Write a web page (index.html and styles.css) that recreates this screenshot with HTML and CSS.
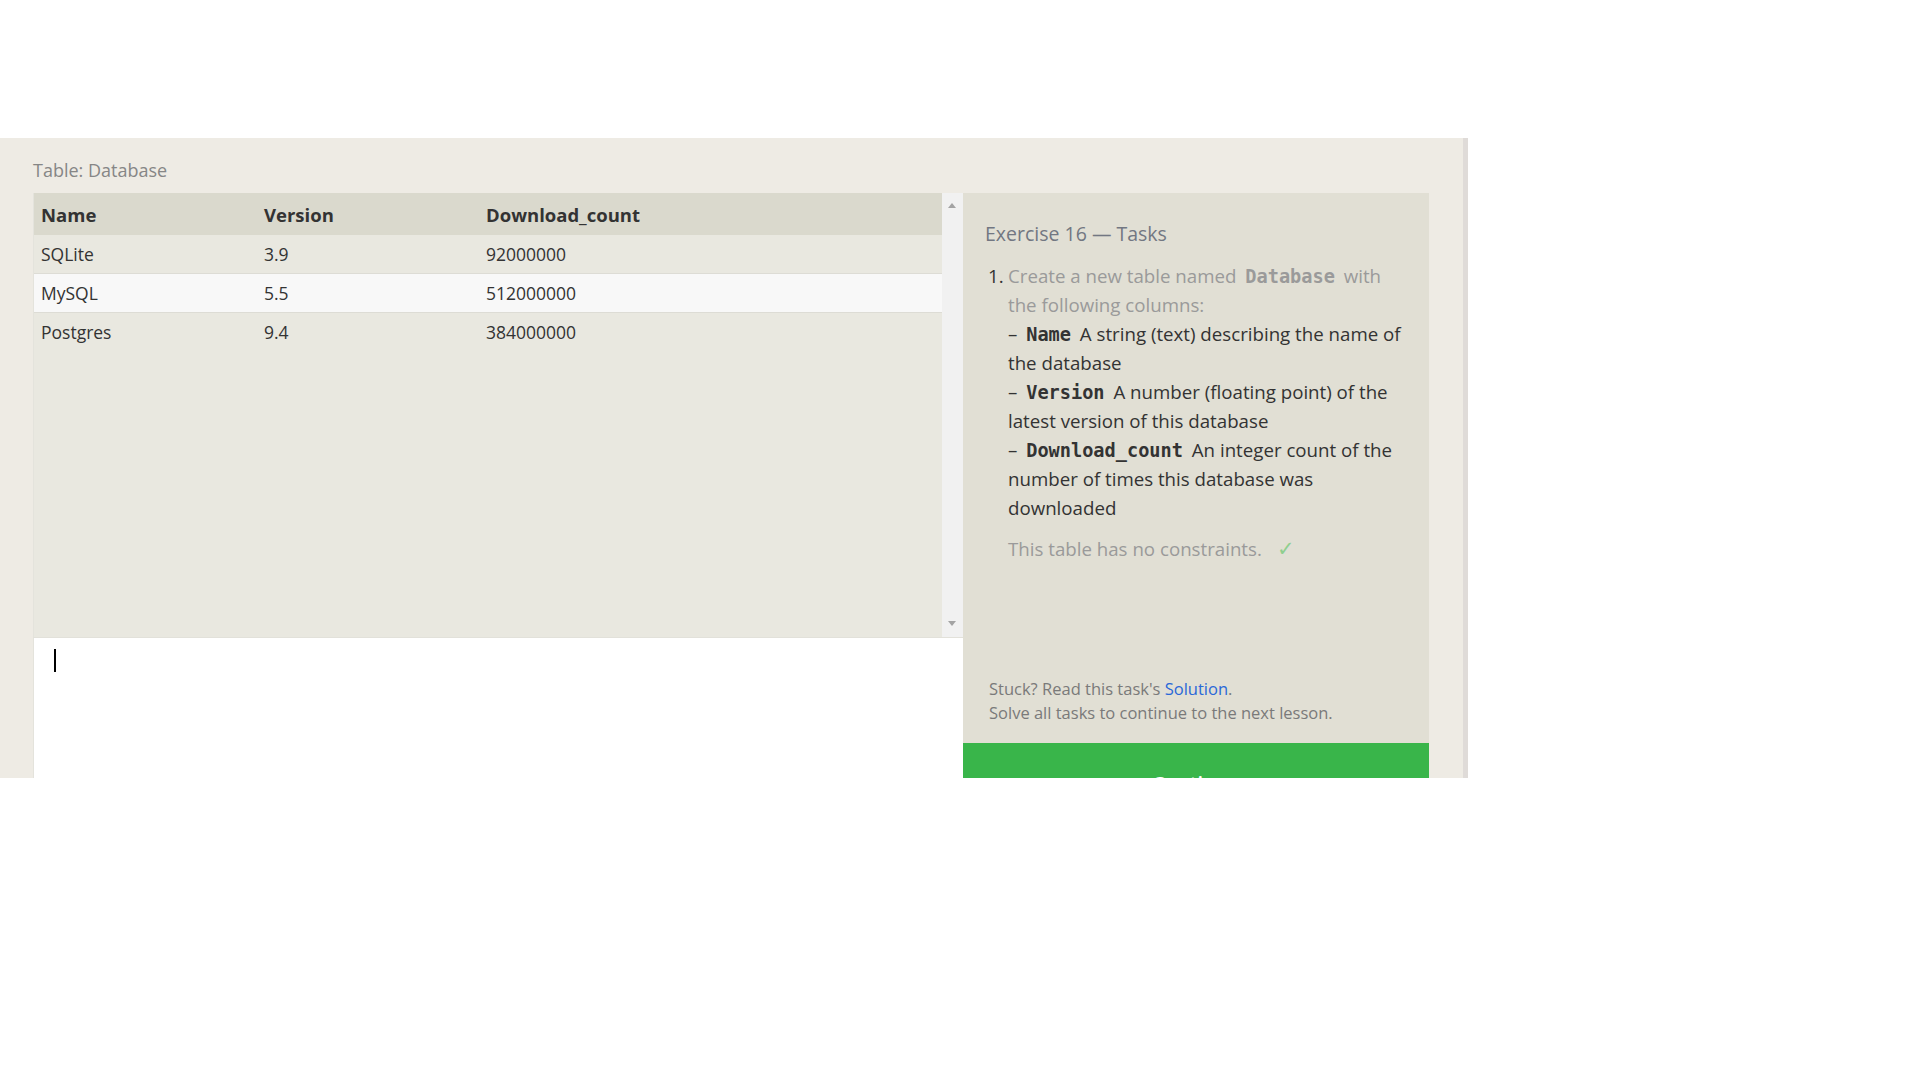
FILE: index.html
```html
<!DOCTYPE html>
<html lang="en">
<head>
<meta charset="utf-8">
<title>Exercise 16</title>
<link rel="stylesheet" href="styles.css">
</head>
<body>
<div class="frame">
  <div class="table-label">Table: Database</div>
  <div class="workspace">
    <div class="left">
      <div class="results">
        <div class="table-wrap">
          <table class="data">
            <thead>
              <tr><th class="c1">Name</th><th class="c2">Version</th><th>Download_count</th></tr>
            </thead>
            <tbody>
              <tr><td>SQLite</td><td>3.9</td><td>92000000</td></tr>
              <tr class="alt"><td>MySQL</td><td>5.5</td><td>512000000</td></tr>
              <tr><td>Postgres</td><td>9.4</td><td>384000000</td></tr>
            </tbody>
          </table>
        </div>
        <div class="scrollbar">
          <span class="arrow up"></span>
          <span class="arrow down"></span>
        </div>
      </div>
      <div class="editor"><span class="cursor"></span></div>
    </div>
    <div class="right">
      <div class="tasks">
        <div class="tasks-title">Exercise 16 — Tasks</div>
        <div class="task">
          <span class="num">1.</span>
          <div class="task-body">
            <span class="muted">Create a new table named <code class="code-muted">Database</code> with the following columns:</span><br>
            – <code>Name</code> A string (text) describing the name of the database<br>
            – <code>Version</code> A number (floating point) of the latest version of this database<br>
            – <code>Download_count</code> An integer count of the number of times this database was downloaded
            <div class="note">This table has no constraints. <span class="check">✓</span></div>
          </div>
        </div>
      </div>
      <div class="hint">
        <div>Stuck? Read this task's <a class="link">Solution</a>.</div>
        <div>Solve all tasks to continue to the next lesson.</div>
      </div>
      <div class="continue">Continue</div>
    </div>
  </div>
</div>
</body>
</html>
```
FILE: styles.css
```css
html, body {
  margin: 0;
  padding: 0;
  background: #ffffff;
}

body {
  font-family: "Open Sans", "Noto Sans", sans-serif;
  color: #333333;
}

.frame {
  margin-top: 138px;
  width: 1468px;
  height: 640px;
  box-sizing: border-box;
  padding: 0 34px 0 33px;
  background: #eeebe4;
  border-right: 5px solid #dfdbd8;
  overflow: hidden;
}

.table-label {
  height: 55px;
  box-sizing: border-box;
  padding-top: 20px;
  font-size: 18px;
  line-height: 25px;
  color: #868686;
}

.workspace {
  display: flex;
  align-items: stretch;
  height: 585px;
}

.left {
  width: 930px;
  display: flex;
  flex-direction: column;
}

.results {
  height: 444px;
  display: flex;
  border-bottom: 1px solid #e2e1da;
}

.table-wrap {
  flex: 1;
  background: #e9e8e0;
  border-left: 1px solid #e4e3dc;
}

.data {
  width: 100%;
  table-layout: fixed;
  border-collapse: collapse;
  font-size: 17.5px;
}

.data th {
  text-align: left;
  font-weight: 700;
  font-size: 18.5px;
  background: #dad9cd;
  height: 41px;
  padding: 1px 0 0 7px;
  color: #333333;
}

.data .c1 { width: 216px; }
.data .c2 { width: 215px; }

.data td {
  height: 38px;
  padding: 0 0 0 7px;
  color: #333333;
}

.data tbody tr + tr td {
  border-top: 1px solid #dddcd5;
}

.data tr.alt td {
  background: #f8f8f8;
}

.scrollbar {
  width: 21px;
  background: #f1f1f1;
  position: relative;
}

.arrow {
  position: absolute;
  left: 6px;
  width: 0;
  height: 0;
  border-left: 4.5px solid transparent;
  border-right: 4.5px solid transparent;
}

.arrow.up {
  top: 10px;
  border-bottom: 5px solid #a3a3a3;
}

.arrow.down {
  bottom: 11px;
  border-top: 5px solid #a3a3a3;
}

.editor {
  flex: 1;
  background: #ffffff;
  border-left: 1px solid #e4e3dc;
}

.cursor {
  display: block;
  width: 2px;
  height: 23px;
  background: #000000;
  margin: 11px 0 0 20px;
}

.right {
  width: 466px;
  height: 585px;
  background: #e1dfd4;
  display: flex;
  flex-direction: column;
}

.tasks {
  flex: 1;
  padding: 27px 20px 0 22px;
}

.tasks-title {
  font-size: 19.5px;
  line-height: 28px;
  color: #727782;
}

.task {
  display: flex;
  margin-top: 13px;
  font-size: 18.7px;
  line-height: 29px;
}

.num {
  width: 20px;
  flex: none;
  padding-left: 3px;
  color: #333333;
}

.task-body {
  flex: 1;
  color: #333333;
}

.muted {
  color: #9a9a9a;
}

code {
  font-family: "DejaVu Sans Mono", "Liberation Mono", monospace;
  font-weight: 700;
  font-size: 18.6px;
  line-height: 18px;
  margin: 0 4px;
  color: #333333;
}

code.code-muted {
  color: #9a9a9a;
}

.note {
  margin-top: 12px;
  color: #9a9a9a;
}

.check {
  color: #8fcf8f;
  font-size: 21px;
  line-height: 18px;
  margin-left: 10px;
}

.hint {
  padding: 0 14px 18px 26px;
  font-size: 16.5px;
  line-height: 24px;
  color: #7a7a7a;
}

.link {
  color: #2a68d8;
}

.continue {
  height: 70px;
  flex: none;
  margin-bottom: -35px;
  box-sizing: border-box;
  padding-top: 26px;
  background: #39b54a;
  color: #ffffff;
  text-align: center;
  font-size: 20px;
  line-height: 30px;
  font-weight: 600;
}
```
